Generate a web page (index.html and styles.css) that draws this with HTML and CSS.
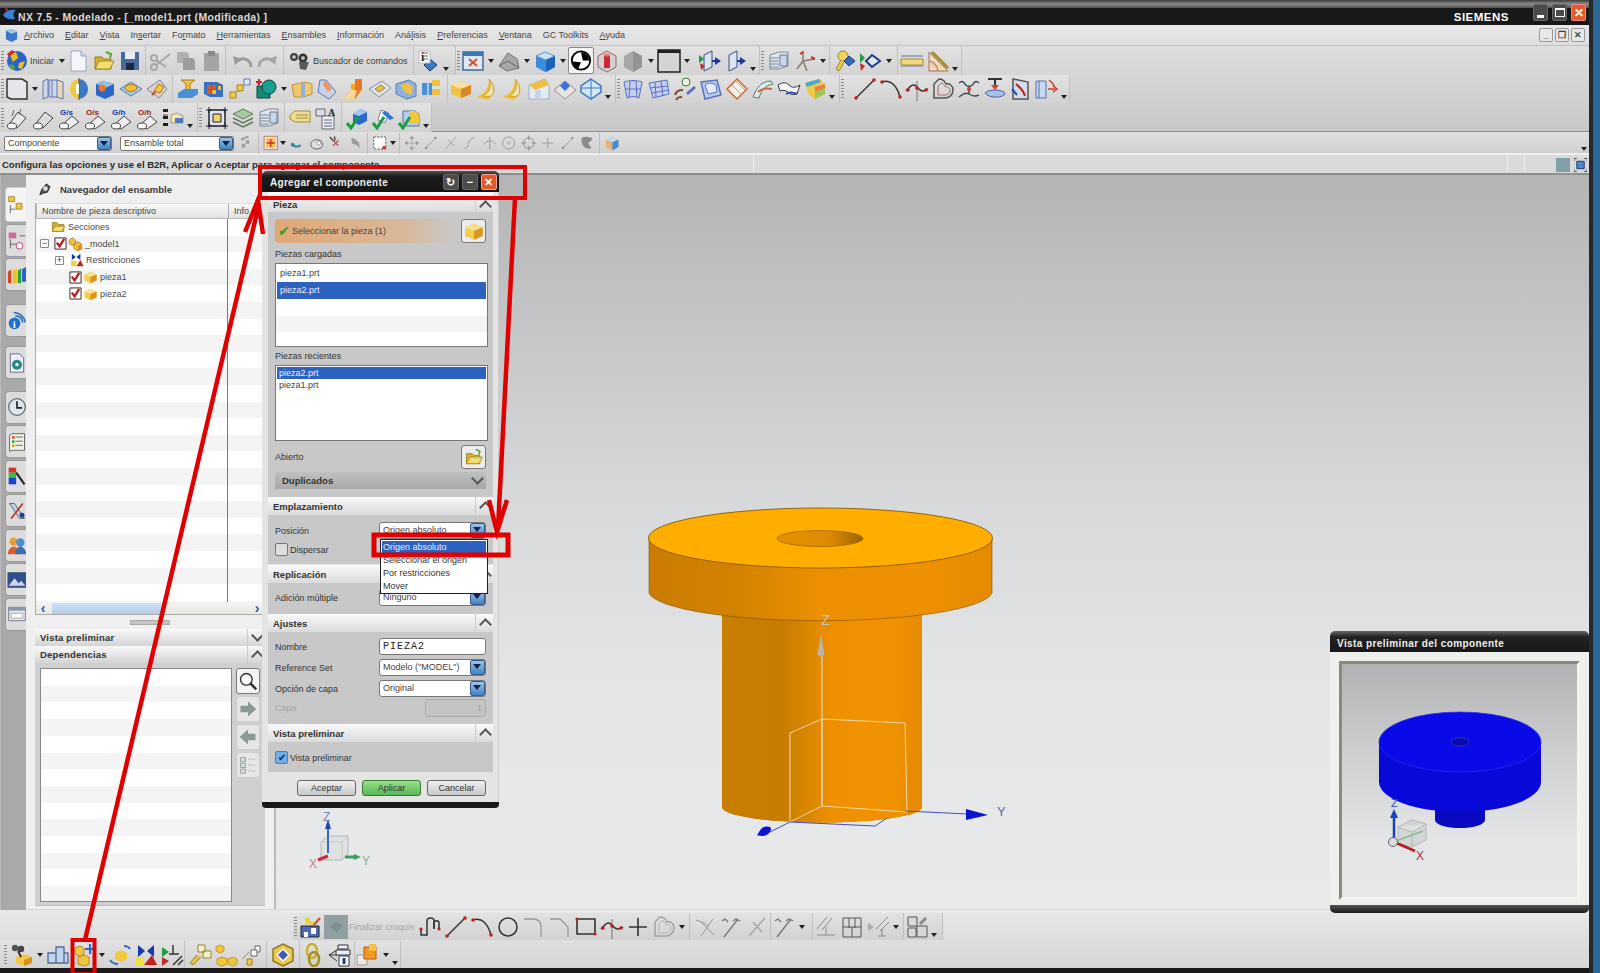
FILE: index.html
```
<!DOCTYPE html>
<html lang="es">
<head>
<meta charset="utf-8">
<title>NX 7.5 - Modelado</title>
<link rel="stylesheet" href="styles.css">
</head>
<body>
<svg class="defs" width="0" height="0">
<defs>
<linearGradient id="flange" x1="0" x2="1" y1="0" y2="0"><stop offset="0" stop-color="#c97c00"/><stop offset=".25" stop-color="#d28200"/><stop offset=".5" stop-color="#ec8f00"/><stop offset=".8" stop-color="#ee9000"/><stop offset="1" stop-color="#e58a00"/></linearGradient>
<linearGradient id="cyl" x1="0" x2="1" y1="0" y2="0"><stop offset="0" stop-color="#c97e00"/><stop offset=".3" stop-color="#c67c00"/><stop offset=".55" stop-color="#ee9000"/><stop offset=".85" stop-color="#f09200"/><stop offset="1" stop-color="#e58a00"/></linearGradient>
<linearGradient id="hole" x1="0" x2="1" y1="0" y2="0"><stop offset="0" stop-color="#e69000"/><stop offset=".6" stop-color="#e08a00"/><stop offset="1" stop-color="#9a6400"/></linearGradient>
<symbol id="globe" viewBox="0 0 24 24"><circle cx="12" cy="12" r="10" fill="#2a62c8"/><path d="M5 6l6-3 2 6-5 4zM14 14l6-2-3 8-4-1z" fill="#e8c020"/><path d="M4 15l5 1 1 5-4-1z" fill="#48a848"/><path d="M2 5l5-4 3 2-6 5z" fill="#d02828"/></symbol>
<symbol id="page" viewBox="0 0 24 24"><path d="M5 2h10l5 5v15H5z" fill="#f4f6fb" stroke="#9aa7c0"/><path d="M15 2v5h5" fill="#cdd6e8" stroke="#9aa7c0"/></symbol>
<symbol id="folder" viewBox="0 0 24 24"><path d="M3 8h7l2 2h7v10H3z" fill="#d8b030" stroke="#9a7a20"/><path d="M3 20l4-8h15l-4 8z" fill="#f4dc70" stroke="#a88a28"/><path d="M14 3l5 2-1 4" fill="none" stroke="#58a838" stroke-width="2"/></symbol>
<symbol id="save" viewBox="0 0 24 24"><path d="M3 3h18v18H3z" fill="#4a6a98"/><path d="M7 3h10v7H7z" fill="#e8ecf4"/><path d="M8 14h8v7H8z" fill="#1c2a48"/></symbol>
<symbol id="scis" viewBox="0 0 24 24"><g fill="none" stroke="#a8a8a8" stroke-width="2"><circle cx="6" cy="18" r="3"/><circle cx="6" cy="9" r="3"/><path d="M8 16l14-11M8 11l10 7"/></g></symbol>
<symbol id="copy" viewBox="0 0 24 24"><path d="M3 3h10l2 3v8H3z" fill="#b0b0b0"/><path d="M9 9h10l2 3v9H9z" fill="#9c9c9c"/></symbol>
<symbol id="paste" viewBox="0 0 24 24"><path d="M4 4h15v18H4z" fill="#a4a4a4"/><path d="M8 2h7v5H8z" fill="#8a8a8a"/></symbol>
<symbol id="undo" viewBox="0 0 24 24"><path d="M21 18c0-7-8-11-14-6" fill="none" stroke="#9a9a9a" stroke-width="3"/><path d="M3 7l2 9 7-6z" fill="#9a9a9a"/></symbol>
<symbol id="redo" viewBox="0 0 24 24"><path d="M3 18c0-7 8-11 14-6" fill="none" stroke="#a6a6a6" stroke-width="3"/><path d="M21 7l-2 9-7-6z" fill="#a6a6a6"/></symbol>
<symbol id="binoc" viewBox="0 0 24 24"><circle cx="6" cy="8" r="4" fill="#444"/><circle cx="15" cy="9" r="4.500" fill="#333"/><path d="M11 13l10 0-3 8-6-1z" fill="#565a60"/><circle cx="6" cy="8" r="1.800" fill="#ccc"/><circle cx="15" cy="9" r="2" fill="#bbb"/></symbol>
<symbol id="info" viewBox="0 0 24 24"><path d="M13 10l7 6-7 6-6-6z" fill="#3a78c8" stroke="#1c3a70"/><path d="M2 2h11v12H2z" fill="#fff" stroke="#bbb"/><text x="4" y="12" font-family="Liberation Serif" font-weight="700" font-size="12" fill="#222">i</text><path d="M7 4h4M7 7h4M7 10h4" stroke="#666"/></symbol>
<symbol id="fit" viewBox="0 0 24 24"><path d="M2 3h20v18H2z" fill="#dfe8f0" stroke="#3e6e9a" stroke-width="1.500"/><path d="M2 3h20v4H2z" fill="#3e78b4"/><path d="M8 10l8 7M16 10l-8 7" stroke="#d84c28" stroke-width="2"/></symbol>
<symbol id="shade" viewBox="0 0 24 24"><path d="M2 17l9-13 9 6 2 9-12 3z" fill="#a8a8a8" stroke="#707070"/><path d="M2 17l9-5 11 7" fill="none" stroke="#666"/></symbol>
<symbol id="cube" viewBox="0 0 24 24"><path d="M3 7l9-4 10 4v11l-10 5-9-5z" fill="#3a8ee0"/><path d="M3 7l9-4 10 4-9 4z" fill="#c8e4fa" stroke="#6098d0"/><path d="M13 11l9-4v11l-9 5z" fill="#1e62b8"/></symbol>
<symbol id="disk" viewBox="0 0 24 24"><circle cx="12" cy="12" r="10" fill="#fff" stroke="#000" stroke-width="2"/><path d="M12 3a9 9 0 0 1 9 9h-7zM3 13l9 1-3 7a9 9 0 0 1-6-8z" fill="#000"/></symbol>
<symbol id="redc" viewBox="0 0 24 24"><path d="M3 7l9-5 9 5v11l-9 5-9-5z" fill="#d8d0d0" stroke="#8a6a6a"/><path d="M9 6h6v13H9z" fill="#c82838"/><ellipse cx="12" cy="6" rx="3" ry="1.500" fill="#e87878"/></symbol>
<symbol id="hex" viewBox="0 0 24 24"><path d="M3 7l9-5 9 5v11l-9 5-9-5z" fill="#a8a8a8"/><path d="M12 2v21l9-5V7z" fill="#949494"/></symbol>
<symbol id="sq" viewBox="0 0 24 24"><path d="M1 1h22v22H1z" fill="#d4d4d4" stroke="#222" stroke-width="1.500"/><path d="M1 1h22v3H1z" fill="#222"/></symbol>
<symbol id="arrf" viewBox="0 0 24 24"><path d="M6 6l8-4v16l-8 4z" fill="#dce4f0" stroke="#30508a"/><path d="M14 12h8" stroke="#1838a0" stroke-width="2"/><path d="M17 8l6 4-6 4z" fill="#1838a0"/><path d="M1 6l5 4-5 4z" fill="#20a040"/><path d="M2 14l5 3-4 4z" fill="#c82828"/></symbol>
<symbol id="arrg" viewBox="0 0 24 24"><path d="M5 6l8-4v16l-8 4z" fill="#dce4f0" stroke="#30508a"/><path d="M13 12h6" stroke="#1838a0" stroke-width="2"/><path d="M16 8l6 4-6 4z" fill="#1838a0"/></symbol>
<symbol id="layers" viewBox="0 0 24 24"><path d="M3 6l9-3h9v14l-9 3H3z" fill="#e0e6ee" stroke="#7a8a9a"/><path d="M3 9h9M3 12h9M3 15h9M3 18h9" stroke="#7a8a9a"/><path d="M13 6h7v11h-7z" fill="#c8d8ec" stroke="#6a7a8a"/></symbol>
<symbol id="layg" viewBox="0 0 24 24"><path d="M2 8l10-5 10 5-10 5z" fill="#a8c8a0" stroke="#607860"/><path d="M2 12l10 5 10-5M2 16l10 5 10-5" fill="none" stroke="#607860" stroke-width="1.500"/></symbol>
<symbol id="csys" viewBox="0 0 24 24"><path d="M10 12V2M10 12l12-2M10 12l-6 8M10 12l4 10" stroke="#8a7a6a" stroke-width="1.500" fill="none"/><path d="M10 3l-3 2M22 10l-4-2" stroke="#c83030" stroke-width="2"/></symbol>
<symbol id="key" viewBox="0 0 24 24"><circle cx="10" cy="7" r="5" fill="#f0d860" stroke="#9a8420"/><path d="M8 11L3 20l3 2 5-9" fill="#e8cc50" stroke="#9a8420"/><path d="M16 7l6 5-6 5-5-5z" fill="#3868c0" stroke="#183880"/></symbol>
<symbol id="ray" viewBox="0 0 24 24"><path d="M13 6l8 6-8 6-6-6z" fill="#e0e8f4" stroke="#1c3c84" stroke-width="2"/><path d="M1 4l5 5-5 5z" fill="#20a040"/><path d="M1 14l5 3-4 5z" fill="#c82828"/></symbol>
<symbol id="ruler" viewBox="0 0 24 24"><path d="M1 7h22M1 17h22" stroke="#5a78a8"/><path d="M1 10h22v6H1z" fill="#f0d880" stroke="#a88a30"/></symbol>
<symbol id="angle" viewBox="0 0 24 24"><path d="M3 3l19 19H3z" fill="#f0dcb0" stroke="#b06868"/><path d="M3 12a10 10 0 0 1 9 10" fill="#e8b8a8" stroke="#b06868"/><path d="M6 3l16 16" stroke="#a88a30" stroke-width="3"/></symbol>
<symbol id="sket" viewBox="0 0 24 24"><path d="M2 2h15l5 3v17H6l-4-2z" fill="#e4e6ea" stroke="#333" stroke-width="1.500"/></symbol>
<symbol id="extr" viewBox="0 0 24 24"><path d="M2 4l5-2v18l-5 2zM8 3h9v17H8z" fill="#cdd8ee" stroke="#6078b0"/><path d="M16 3l6 2v17l-6-2z" fill="#e8d8b8" stroke="#6078b0"/><path d="M11 3v17" stroke="#6078b0"/></symbol>
<symbol id="revo" viewBox="0 0 24 24"><ellipse cx="12" cy="12" rx="9" ry="10" fill="#f0c838"/><path d="M12 2a9 10 0 0 1 0 20z" fill="#3a78c8"/><path d="M12 1v22" stroke="#555"/><path d="M9 7h3v10H9z" fill="#fff"/></symbol>
<symbol id="holeb" viewBox="0 0 24 24"><path d="M3 7l7-3 11 3v11l-9 4-9-4z" fill="#2a68c8"/><path d="M3 7l7-3 11 3-9 4z" fill="#90c0f0"/><circle cx="9" cy="11" r="3.500" fill="#f07820"/></symbol>
<symbol id="boss" viewBox="0 0 24 24"><path d="M1 12l11-7 11 7-11 7z" fill="#a8c8e8" stroke="#5a80b0"/><ellipse cx="12" cy="11" rx="6" ry="3.500" fill="#f0c030" stroke="#b07818"/></symbol>
<symbol id="fan" viewBox="0 0 24 24"><path d="M2 12L15 3l7 9-8 9z" fill="#dcd0c8" stroke="#7888a0"/><path d="M9 14l5-7 5 3-4 6z" fill="#f0c838" stroke="#a07020"/><path d="M7 18l3-3" stroke="#d84020" stroke-width="2"/></symbol>
<symbol id="padt" viewBox="0 0 24 24"><path d="M5 3h14l-5 4v6l-2 1-2-1V7z" fill="#f0c040" stroke="#a88020"/><path d="M2 16l6-4h14v5l-6 4H2z" fill="#4a90d8"/></symbol>
<symbol id="tile" viewBox="0 0 24 24"><path d="M2 5h13l6 3v12H8l-6-3z" fill="#3a70c0"/><path d="M5 8h4v4H5zM10 8h4v4h-4zM5 13h4v4H5z" fill="#d85830"/><path d="M10 13h4v4h-4zM16 9h3v4h-3z" fill="#e8c040"/></symbol>
<symbol id="nodes" viewBox="0 0 24 24"><path d="M6 18L18 6" stroke="#5a88c8" stroke-width="2" stroke-dasharray="3 2"/><path d="M2 15h6v6H2zM9 8h6v6H9z" fill="#f0d040" stroke="#a08020"/><path d="M16 2h6v6h-6z" fill="#e0e8f8" stroke="#6078a8"/></symbol>
<symbol id="tplus" viewBox="0 0 24 24"><path d="M3 9h13v12H3z" fill="#148a78" stroke="#0a4438"/><circle cx="15" cy="10" r="7" fill="#18a090" stroke="#0a4438"/><path d="M2 5h6M5 2v6" stroke="#d02020" stroke-width="2"/></symbol>
<symbol id="ycube" viewBox="0 0 24 24"><path d="M2 8l13-3 7 2v10l-8 3H4z" fill="#f0c868" stroke="#c09040"/><path d="M11 6h4v14h-4z" fill="#90b0e0"/></symbol>
<symbol id="blade" viewBox="0 0 24 24"><path d="M4 3h6l10 12-7 7L2 15z" fill="#c8d4ec" stroke="#5a78b8"/><path d="M9 3l7 9-4 3-5-7z" fill="#f09860"/></symbol>
<symbol id="yslab" viewBox="0 0 24 24"><path d="M2 22l7-10V7h9l2-5v10l-7 10z" fill="#f0a820"/><path d="M13 2h7v10l-7 10z" fill="#e87820"/><path d="M2 22l7-10 6 2-3 8z" fill="#f8d898"/></symbol>
<symbol id="slot" viewBox="0 0 24 24"><path d="M1 12l13-8 9 7-12 9z" fill="#dce4ec" stroke="#8090a8"/><path d="M7 12l6-4 4 3-6 4z" fill="#f0c040" stroke="#a08030"/></symbol>
<symbol id="wedge" viewBox="0 0 24 24"><path d="M2 7l13-4 7 4v12l-9 3-11-5z" fill="#90b0e0" stroke="#6080b0"/><path d="M6 8l8-2 5 4-2 8-6-3z" fill="#f0c040"/></symbol>
<symbol id="cyl2" viewBox="0 0 24 24"><path d="M2 6h10v12H2z" fill="#4a90d8"/><path d="M12 3h8v6h-8zM12 12h8v6h-8z" fill="#f0c040"/><path d="M8 6v12" stroke="#fff"/></symbol>
<symbol id="cup" viewBox="0 0 24 24"><path d="M2 8l10-4 10 4v9l-10 4-10-4z" fill="#f4c040"/><path d="M2 8l10-4 10 4-10 4z" fill="#f8e0a0"/><path d="M12 12v9l10-4V8z" fill="#d88828"/></symbol>
<symbol id="petal" viewBox="0 0 24 24"><path d="M14 2c7 5 7 14 0 20-5 1-10-1-12-3 8-1 12-9 12-17z" fill="#f0c030"/><path d="M14 2c3 6 1 14-6 17 4 1 8 1 10-2 2-5 0-11-4-15z" fill="#f4e4b0" stroke="#c8a040"/></symbol>
<symbol id="gable" viewBox="0 0 24 24"><path d="M2 8l16-6 4 6v14H2z" fill="#e4ecf8" stroke="#a0b0c8"/><path d="M2 8l16-6 4 6-14 5z" fill="#f0c040"/><path d="M8 13h6v9H8z" fill="#c8d4e8"/></symbol>
<symbol id="diam" viewBox="0 0 24 24"><path d="M1 13l11-9 11 9-11 9z" fill="#e8e4e0" stroke="#909090"/><path d="M7 9l5-5 5 5-5 5z" fill="#3a70d8"/></symbol>
<symbol id="sphere" viewBox="0 0 24 24"><path d="M12 2l10 7v6l-10 7-10-7V9z" fill="#d4e8fa" stroke="#3a78c8" stroke-width="1.500"/><path d="M2 11h20M12 2v20" stroke="#3a78c8"/></symbol>
<symbol id="curv" viewBox="0 0 24 24"><path d="M3 5c6-2 12-2 18 0l-3 16c-4-2-8-2-12 0z" fill="#c4d0f0" stroke="#5a70c0"/><path d="M9 4l-1 17M15 4l1 17M4 12h16" stroke="#5a70c0"/></symbol>
<symbol id="grid" viewBox="0 0 24 24"><path d="M2 6l18-3 2 14-16 4z" fill="#c4d0f0" stroke="#5a70c0"/><path d="M8 5l1 15M14 4l2 15M3 11l18-2M5 16l17-3" stroke="#5a70c0"/></symbol>
<symbol id="gauge" viewBox="0 0 24 24"><circle cx="13" cy="5" r="4" fill="#f0f0f0" stroke="#357a35"/><path d="M2 18c1-4 4-5 8-5M3 23c2-3 3-3 6-3" fill="none" stroke="#7a4a2a" stroke-width="2"/><path d="M13 16l8-7 2 2-8 7z" fill="#5a70c0"/></symbol>
<symbol id="warp" viewBox="0 0 24 24"><path d="M2 5l16-2 4 15-16 4z" fill="#b8ccec" stroke="#5a70c0" stroke-width="1.500"/><path d="M6 8c4-3 8-2 11 0l1 7-9 2z" fill="#e4ecf8" stroke="#5a70c0"/></symbol>
<symbol id="fold" viewBox="0 0 24 24"><path d="M12 2l10 10-10 10L2 12z" fill="#f4f0e8" stroke="#d06838" stroke-width="1.500"/><path d="M7 8l10 10M11 4l9 9" stroke="#90a8d0"/></symbol>
<symbol id="swirl" viewBox="0 0 24 24"><path d="M2 20c3-8 8-16 18-16l2 3C14 8 10 14 8 21z" fill="#e0e8f0" stroke="#508060"/><path d="M7 15c3-3 8-4 14-3" fill="none" stroke="#d06838" stroke-width="2"/></symbol>
<symbol id="leaf" viewBox="0 0 24 24"><path d="M1 8c5-3 8-3 11 0s6 3 11 0l-3 9c-4 1-6 1-9-2-3-2-5-2-8-1z" fill="#f4f6fa" stroke="#333"/><path d="M9 17c3-2 7-2 11 0" stroke="#3048b0" stroke-width="2" fill="none"/></symbol>
<symbol id="rain" viewBox="0 0 24 24"><path d="M2 6l14-4 6 5v10l-10 5-6-4z" fill="#f0c848"/><path d="M2 6l14-4 2 3-14 5z" fill="#4aa8d8"/><path d="M12 10l10-3v4l-10 4z" fill="#e88040"/><path d="M12 15l10-4v6l-10 5z" fill="#a0c858"/></symbol>
<symbol id="line" viewBox="0 0 24 24"><path d="M3 21L21 3" stroke="#333" stroke-width="1.500"/><circle cx="3" cy="21" r="1.800" fill="#c02020"/><circle cx="21" cy="3" r="1.800" fill="#c02020"/></symbol>
<symbol id="arc" viewBox="0 0 24 24"><path d="M3 5c9-3 15 4 18 15" fill="none" stroke="#333" stroke-width="1.500"/><circle cx="3" cy="5" r="1.800" fill="#c02020"/><circle cx="21" cy="20" r="1.800" fill="#c02020"/></symbol>
<symbol id="spline" viewBox="0 0 24 24"><path d="M1 14c4-4 7-9 11-4s6 5 11 2" fill="none" stroke="#333" stroke-width="1.500"/><path d="M12 4v20" stroke="#777"/><circle cx="12" cy="11" r="1.800" fill="#c02020"/><circle cx="3" cy="13" r="1.800" fill="#c02020"/><circle cx="21" cy="13" r="1.800" fill="#c02020"/></symbol>
<symbol id="prof" viewBox="0 0 24 24"><path d="M3 21V7l5-5c5 0 6 3 7 5 3-1 7 1 7 6 0 5-4 8-8 8z" fill="none" stroke="#555" stroke-width="1.500"/><path d="M7 18V9l3-3c3 0 3 2 4 4 3-1 5 1 5 3 0 3-2 5-5 5z" fill="none" stroke="#b06868"/></symbol>
<symbol id="profg" viewBox="0 0 24 24"><path d="M3 21V7l5-5c5 0 6 3 7 5 3-1 7 1 7 6 0 5-4 8-8 8z" fill="none" stroke="#a4a4a4" stroke-width="1.500"/><path d="M7 18V9l3-3c3 0 3 2 4 4 3-1 5 1 5 3 0 3-2 5-5 5z" fill="none" stroke="#b4b4b4"/></symbol>
<symbol id="trim" viewBox="0 0 24 24"><path d="M2 6c6-5 5 5 10 3M22 6c-6-5-5 5-10 3M12 9v8M2 20c4-3 7-5 10-3s6 3 10 1" fill="none" stroke="#3a4a5a" stroke-width="1.500"/><circle cx="12" cy="12" r="2" fill="#d04020"/></symbol>
<symbol id="press" viewBox="0 0 24 24"><path d="M5 2h14M12 2v7" stroke="#333" stroke-width="2"/><path d="M12 13l-4-5h8z" fill="#d84020"/><path d="M2 16c4-4 16-4 20 0 0 5-16 6-20 0z" fill="#a8c0e8" stroke="#5060a0"/></symbol>
<symbol id="cur2" viewBox="0 0 24 24"><path d="M4 2l15 3v17H4z" fill="#d4dcec" stroke="#555" stroke-width="1.500"/><path d="M7 7c3 3 7 5 9 12" fill="none" stroke="#c02020" stroke-width="2"/><path d="M3 12l5 6" stroke="#2050b0" stroke-width="2"/></symbol>
<symbol id="cyar" viewBox="0 0 24 24"><path d="M1 4h10v17H1z" fill="#c8d8f0" stroke="#5070b0"/><path d="M4 4v17" stroke="#5070b0"/><path d="M13 12h7" stroke="#d83820" stroke-width="1.500"/><path d="M18 9l4 3-4 3M14 3c3 2 5 5 6 8" fill="none" stroke="#d83820" stroke-width="1.500"/></symbol>
<symbol id="move" viewBox="0 0 24 24"><path d="M12 2v20M2 12h20M12 2l-3 3h6zM12 22l-3-3h6zM2 12l3-3v6zM22 12l-3-3v6z" stroke="#9a9a9a" fill="#9a9a9a"/></symbol>
<symbol id="gline" viewBox="0 0 24 24"><path d="M4 20L20 4" stroke="#a0a0a0" stroke-width="1.500"/><path d="M4 20l2-1M20 4l-2 1" stroke="#777" stroke-width="3"/></symbol>
<symbol id="gx" viewBox="0 0 24 24"><path d="M4 21L20 3M8 7l9 10" stroke="#a8a8a8" stroke-width="1.500"/></symbol>
<symbol id="gs" viewBox="0 0 24 24"><path d="M4 20C14 20 6 4 20 4" fill="none" stroke="#a0a0a0" stroke-width="1.500"/></symbol>
<symbol id="gt" viewBox="0 0 24 24"><path d="M12 3v18M3 14c6-7 12-7 18 0" fill="none" stroke="#9a9a9a" stroke-width="1.500"/></symbol>
<symbol id="gcirc" viewBox="0 0 24 24"><circle cx="12" cy="12" r="9" fill="none" stroke="#a0a0a0" stroke-width="1.500"/><circle cx="12" cy="12" r="2" fill="none" stroke="#a0a0a0"/></symbol>
<symbol id="gcross" viewBox="0 0 24 24"><circle cx="12" cy="12" r="8" fill="none" stroke="#909090" stroke-width="1.500"/><path d="M12 1v7M12 16v7M1 12h7M16 12h7" stroke="#909090" stroke-width="1.500"/></symbol>
<symbol id="plus" viewBox="0 0 24 24"><path d="M12 4v16M4 12h16" stroke="#a0a0a0" stroke-width="1.500"/></symbol>
<symbol id="plusb" viewBox="0 0 24 24"><path d="M12 3v18M3 12h18" stroke="#333" stroke-width="1.600"/></symbol>
<symbol id="gblob" viewBox="0 0 24 24"><path d="M4 5c6-4 14-2 17 1l-4 4c-3 0-3 4 0 6l2 4c-8 2-15-2-15-15z" fill="#8a8a8a"/></symbol>
<symbol id="selg" viewBox="0 0 24 24"><path d="M5 4h5v4H5zM12 8h5v5h-5zM6 13h5v6H6z" fill="#9aa0a0"/><path d="M10 4l6-1" stroke="#888" stroke-width="2"/></symbol>
<symbol id="selr" viewBox="0 0 24 24"><path d="M2 2h20v20H2z" fill="#f0e4d8" stroke="#b05050"/><path d="M5 5h14v14H5z" fill="#f0c050"/><path d="M12 6v12M6 12h12" stroke="#c83020" stroke-width="2"/></symbol>
<symbol id="swirlb" viewBox="0 0 24 24"><path d="M4 13a8 6 0 0 0 14 2" fill="none" stroke="#2a8aa0" stroke-width="3"/><path d="M4 11l6 3-6 4z" fill="#2a8aa0"/></symbol>
<symbol id="eggs" viewBox="0 0 24 24"><ellipse cx="12" cy="14" rx="9" ry="7" fill="#e0e0e0" stroke="#666" stroke-width="1.500"/><circle cx="15" cy="12" r="3" fill="#fff" stroke="#777"/></symbol>
<symbol id="cross" viewBox="0 0 24 24"><path d="M8 8l8 8M16 8l-8 8" stroke="#c05848" stroke-width="2"/><path d="M3 3l6 6M10 2l1 6" stroke="#444" stroke-width="2"/></symbol>
<symbol id="pin" viewBox="0 0 24 24"><path d="M5 4l6 2 6 6 1 8-5-5-6-2z" fill="#9a9a9a"/></symbol>
<symbol id="dash" viewBox="0 0 24 24"><path d="M3 3h18v18H3z" fill="#fff" stroke="#555" stroke-dasharray="3 2" stroke-width="1.500"/><path d="M16 17h5v4h-5z" fill="#c03020"/></symbol>
<symbol id="g1" viewBox="0 0 24 24"><path d="M3 5c3 1 10 3 12 6M20 4l-12 17M21 20L7 6" stroke="#999" fill="none"/></symbol>
<symbol id="g2" viewBox="0 0 24 24"><path d="M5 22l14-18M3 6l3-2 3 3M14 6l3-2 4 2" stroke="#777" fill="none" stroke-width="1.300"/></symbol>
<symbol id="g3" viewBox="0 0 24 24"><path d="M3 20h18M12 20v-8M3 14L13 2M8 15L18 3" stroke="#8a8a8a" fill="none"/></symbol>
<symbol id="g4" viewBox="0 0 24 24"><path d="M3 3h18v19H3z" fill="none" stroke="#555"/><path d="M3 12h18M9 3v10M15 3v10M12 12v10" stroke="#555"/></symbol>
<symbol id="g5" viewBox="0 0 24 24"><path d="M2 8l6 4-6 4z" fill="#aaa"/><path d="M12 21h8M16 21v-7M10 14L22 2M14 16L23 7" stroke="#888"/></symbol>
<symbol id="g6" viewBox="0 0 24 24"><path d="M3 2h9v9H3zM3 13h8v9H3zM12 11h10v11H12z" fill="#d8d8d8" stroke="#555"/><path d="M15 9l6-6" stroke="#888" stroke-width="3"/></symbol>
<symbol id="rect" viewBox="0 0 24 24"><path d="M3 4h18v15H3z" fill="none" stroke="#333" stroke-width="1.600"/><circle cx="3" cy="4" r="1.600" fill="#c02020"/><circle cx="21" cy="19" r="1.600" fill="#c02020"/></symbol>
<symbol id="circ" viewBox="0 0 24 24"><circle cx="12" cy="12" r="9" fill="none" stroke="#333" stroke-width="1.500"/></symbol>
<symbol id="cnr1" viewBox="0 0 24 24"><path d="M2 4h9c5 0 8 3 8 8v10" fill="none" stroke="#999" stroke-width="1.300"/></symbol>
<symbol id="cnr2" viewBox="0 0 24 24"><path d="M2 4h10l8 8v10" fill="none" stroke="#999" stroke-width="1.300"/></symbol>
<symbol id="prof2" viewBox="0 0 24 24"><path d="M3 14v6h6V6c0-4 7-4 7 0v8" fill="none" stroke="#333" stroke-width="1.500"/><path d="M16 14v-6c0-3 5-3 5 0v6" fill="none" stroke="#333" stroke-width="1.500"/><circle cx="3" cy="14" r="1.600" fill="#c02020"/><circle cx="21" cy="14" r="1.600" fill="#c02020"/></symbol>
<symbol id="star" viewBox="0 0 24 24"><path d="M3 11h18v11H3z" fill="#4a6ab8" stroke="#222"/><path d="M6 17h4v5H6zM13 13h5v6h-5z" fill="#fff"/><path d="M10 2l2 4 4 1-3 3-3-2-3 2 1-4-2-2 3-1z" fill="#f0d020"/><path d="M15 11L22 3" stroke="#d05020" stroke-width="2"/></symbol>
<symbol id="tex" viewBox="0 0 24 24"><path d="M0 0h24v24H0z" fill="#8f9fa2"/><path d="M5 12l7-6 7 5-6 7z" fill="#7f8f90" stroke="#a0aeb0" stroke-dasharray="1 1"/></symbol>
<symbol id="ybin" viewBox="0 0 24 24"><path d="M6 14l8-3 8 3v6l-8 3-8-3z" fill="#f0c840"/><path d="M14 17l8-3v6l-8 3z" fill="#d89020"/><circle cx="5" cy="5" r="3.200" fill="#555"/><circle cx="11" cy="6" r="3.200" fill="#444"/><path d="M8 8l3 6" stroke="#333" stroke-width="2"/></symbol>
<symbol id="blocks" viewBox="0 0 24 24"><path d="M2 10h8v10H2zM10 4h8v16h-8zM18 10h4v10h-4z" fill="#c0d4f0" stroke="#5a6a90" stroke-width="1.300"/></symbol>
<symbol id="addc" viewBox="0 0 24 24"><path d="M3 5l5-2 4 2v6l-4 2-5-2zM6 14l6-2 5 2v7l-5 2-6-2z" fill="#f0c840" stroke="#b88820"/><path d="M18 1v10M13 6h10" stroke="#1a6ad8" stroke-width="2"/></symbol>
<symbol id="orb" viewBox="0 0 24 24"><path d="M7 10l6-3 6 3v6l-6 3-6-3z" fill="#f0c840"/><path d="M2 17c2 3 5 4 8 4M16 3c3 0 5 1 6 3" fill="none" stroke="#3a6ab8" stroke-width="2"/></symbol>
<symbol id="constr" viewBox="0 0 24 24"><path d="M4 2l7 6-7 6zM20 2l-7 6 7 6z" fill="#1838b0"/><path d="M2 14h8v8H2z" fill="#f0e040"/><path d="M10 22l8-10 5 10z" fill="#c02020"/></symbol>
<symbol id="perp" viewBox="0 0 24 24"><path d="M13 2v9M9 11h10M13 22l9-9M18 22l5-5" stroke="#333" stroke-width="1.500"/><path d="M2 4l7 5-7 5z" fill="#20a040"/><path d="M2 14l7 4-7 5z" fill="#c82828"/></symbol>
<symbol id="keyc" viewBox="0 0 24 24"><path d="M10 2h7v7h-7zM15 8h8v7h-8z" fill="#f4f0d8" stroke="#9a8420"/><path d="M9 12l-7 8 3 2 8-8" fill="#e8c040" stroke="#9a8420"/></symbol>
<symbol id="dots3" viewBox="0 0 24 24"><path d="M6 2l4 2v4l-4 2-4-2V4zM8 14l5 2v5l-5 2-5-2v-5zM19 14l4 2v5l-4 2-5-2v-5z" fill="#f0c840" stroke="#c89828"/></symbol>
<symbol id="chain" viewBox="0 0 24 24"><path d="M2 16l7-7" stroke="#888"/><path d="M7 16h5v6H7z" fill="#f0c840" stroke="#a88020"/><path d="M15 9h5V3h-5z" fill="#fff" stroke="#666"/><path d="M11 13h6V7h-6z" fill="#fff" stroke="#666"/></symbol>
<symbol id="hexd" viewBox="0 0 24 24"><path d="M12 1l10 5v12l-10 5-10-5V6z" fill="#e8c850" stroke="#907820" stroke-width="1.500"/><path d="M12 5l7 7-7 7-7-7z" fill="#fff"/><path d="M12 7l5 5-5 5-5-5z" fill="#3a5ab8"/></symbol>
<symbol id="link" viewBox="0 0 24 24"><ellipse cx="11" cy="8" rx="5" ry="7" fill="none" stroke="#c8b030" stroke-width="2.500"/><ellipse cx="13" cy="16" rx="5" ry="7" fill="none" stroke="#a89020" stroke-width="2.500"/></symbol>
<symbol id="tree" viewBox="0 0 24 24"><path d="M2 12l8-5M2 12l8 6" stroke="#333"/><path d="M2 12h8" stroke="#333"/><path d="M11 2h10v4H11zM9 7h14v5H9z" fill="#eef" stroke="#333"/><path d="M12 13h10v10H12z" fill="#fff" stroke="#333"/><path d="M17 15v6" stroke="#1c3c84" stroke-width="3"/></symbol>
<symbol id="gbox" viewBox="0 0 24 24"><path d="M1 12h10v10H1z" fill="#e8e8e8" stroke="#999"/><path d="M8 4h12v12H8z" fill="#f09820" stroke="#c05818"/><path d="M13 1h7v7h-7z" fill="#f8c040"/></symbol>
<symbol id="ck" viewBox="0 0 14 14"><path d="M1 1h12v12H1z" fill="#fff" stroke="#3a1a1a"/><path d="M3 6l3 4 5-8" fill="none" stroke="#c01818" stroke-width="2.500"/></symbol>
<symbol id="asm" viewBox="0 0 18 18"><path d="M1 4l4-3 4 3v5l-4 2-4-2zM7 9l5-3 5 3v6l-5 3-5-3z" fill="#f0c040" stroke="#b08020"/><path d="M12 12v6l5-3V9z" fill="#d89020"/></symbol>
<symbol id="part" viewBox="0 0 16 16"><path d="M1 5l7-3 7 3v7l-7 3-7-3z" fill="#f4cc50"/><path d="M1 5l7-3 7 3-7 3z" fill="#f8e090"/><path d="M8 8l7-3v7l-7 3z" fill="#d89820"/></symbol>
<symbol id="fopen" viewBox="0 0 16 16"><path d="M1 3h5l2 2h6v8H1z" fill="#d8b030" stroke="#9a7a20"/><path d="M1 13l3-6h11l-3 6z" fill="#f4dc70" stroke="#a88a28"/></symbol>
<symbol id="cons" viewBox="0 0 18 18"><path d="M3 1l5 4-5 4zM14 1L9 5l5 4z" fill="#1838b0"/><path d="M2 10h7v7H2z" fill="#f0d040"/><path d="M9 17l5-8 4 8z" fill="#c02020"/></symbol>
<symbol id="mag" viewBox="0 0 24 24"><circle cx="10" cy="10" r="7" fill="#f6f8fa" stroke="#333" stroke-width="1.600"/><path d="M15 15l7 7" stroke="#333" stroke-width="3"/></symbol>
<symbol id="arrr" viewBox="0 0 24 24"><path d="M3 8h9V3l10 9-10 9v-5H3z" fill="#8a9a98"/></symbol>
<symbol id="arrl" viewBox="0 0 24 24"><path d="M21 8h-9V3L2 12l10 9v-5h9z" fill="#8a9a98"/></symbol>
<symbol id="lst" viewBox="0 0 24 24"><path d="M3 3h6v5H3zM3 10h6v5H3zM3 17h6v5H3z" fill="#cdd" stroke="#999"/><path d="M12 5h9M12 12h9M12 19h9" stroke="#aaa" stroke-dasharray="2 1"/></symbol>
<symbol id="navk" viewBox="0 0 14 14"><path d="M2 13l2-6 5-6 4 3-3 6-5 1z" fill="#555" stroke="#222"/><circle cx="8" cy="6" r="2.500" fill="#ddd"/></symbol>
<symbol id="t1" viewBox="0 0 24 24"><path d="M2 2h7v6H2zM11 10h7v7h-7z" fill="#f0c840" stroke="#a88020"/><path d="M4 12v10M4 17h6" stroke="#555"/></symbol>
<symbol id="t2" viewBox="0 0 24 24"><path d="M2 3h9v7H2z" fill="#d068a0"/><circle cx="15" cy="19" r="4" fill="#fff" stroke="#b02060"/><path d="M4 11v11M4 17h7M15 7h7" stroke="#555"/></symbol>
<symbol id="t3" viewBox="0 0 24 24"><path d="M1 8l4-3v17H1z" fill="#e04020"/><path d="M7 7l5-3v18H7z" fill="#f0c020"/><path d="M13 7l4-3v18h-4z" fill="#20a040"/><path d="M18 5l5-3v18h-5z" fill="#3060c8"/></symbol>
<symbol id="t4" viewBox="0 0 24 24"><circle cx="9" cy="16" r="7" fill="#2070c8"/><text x="7" y="21" font-family="Liberation Serif" font-weight="700" font-size="13" fill="#fff">i</text><path d="M8 3c7 0 13 5 14 12M10 7c5 0 8 3 9 8" fill="none" stroke="#2070c8" stroke-width="2"/></symbol>
<symbol id="t5" viewBox="0 0 24 24"><path d="M4 1h11l5 5v17H4z" fill="#eef" stroke="#557"/><circle cx="12" cy="14" r="6" fill="#2a8a80"/><circle cx="12" cy="14" r="2" fill="#fff"/></symbol>
<symbol id="t6" viewBox="0 0 24 24"><circle cx="12" cy="12" r="10" fill="#dfe6ee" stroke="#5a6a7a" stroke-width="1.500"/><path d="M12 5v8h6" fill="none" stroke="#223" stroke-width="2"/></symbol>
<symbol id="t7" viewBox="0 0 24 24"><path d="M3 4l3-2h15v20H6l-3 1z" fill="#f0f0e4" stroke="#555"/><path d="M10 6h9M10 11h9M10 16h9" stroke="#555"/><path d="M6 5h3v3H6z" fill="#d04020"/><path d="M6 10h3v3H6z" fill="#20a040"/><path d="M6 15h3v3H6z" fill="#d0a020"/></symbol>
<symbol id="t8" viewBox="0 0 24 24"><path d="M2 2h9v6H2z" fill="#e03020"/><path d="M2 8h9v6H2z" fill="#30c040"/><path d="M2 14h9v8H2z" fill="#2040d0"/><path d="M11 8l10 14" stroke="#222" stroke-width="2.500"/></symbol>
<symbol id="t9" viewBox="0 0 24 24"><path d="M3 3h6l12 18h-6z" fill="#c0d0e8" stroke="#556"/><path d="M5 21l14-18" stroke="#c03020" stroke-width="2"/><circle cx="18" cy="17" r="3" fill="#203a90"/></symbol>
<symbol id="t10" viewBox="0 0 24 24"><circle cx="8" cy="8" r="5" fill="#e8a030"/><circle cx="16" cy="9" r="5" fill="#4a90d0"/><path d="M1 23c0-6 4-9 7-9s7 3 7 9z" fill="#d86030"/><path d="M10 23c0-6 3-9 6-9s7 3 7 9z" fill="#3a70b0"/></symbol>
<symbol id="t11" viewBox="0 0 24 24"><path d="M1 3h22v18H1z" fill="#2f4f8f" stroke="#567"/><path d="M2 19l7-9 5 6 3-3 5 6z" fill="#d0d8e8"/></symbol>
<symbol id="t12" viewBox="0 0 24 24"><path d="M2 4h20v16H2z" fill="#e8eaee" stroke="#667"/><path d="M2 4h20v4H2z" fill="#8898a8"/><path d="M5 11h14v6H5z" fill="#fff" stroke="#999"/></symbol>
<symbol id="selblk" viewBox="0 0 24 24"><path d="M3 7l9-4 10 4v11l-10 5-9-5z" fill="#f0b070"/><path d="M3 7l9-4 10 4-9 4z" fill="#b8dcf8"/><path d="M13 11l9-4v11l-9 5z" fill="#3a8ae0"/></symbol>
<symbol id="fr1" viewBox="0 0 24 24"><path d="M3 20L13 6l8 6-9 10z" fill="#e8e8e8" stroke="#444"/><ellipse cx="7" cy="20" rx="4.500" ry="3" fill="#fff" stroke="#444"/><path d="M9 4l-2 6M16 3l-2 6" stroke="#666"/></symbol>
<symbol id="frs" viewBox="0 0 24 24"><path d="M3 20L14 6l8 6-10 10z" fill="#dcdcdc" stroke="#444"/><ellipse cx="7" cy="20" rx="4.500" ry="3" fill="#fff" stroke="#444"/></symbol>
<symbol id="gs1" viewBox="0 0 24 24"><path d="M3 21L15 10l7 6-10 7z" fill="#eee" stroke="#444"/><ellipse cx="7" cy="20" rx="4.500" ry="3" fill="#fff" stroke="#444"/><text x="3" y="9" class="ts" fill="#1838a0">G/s</text></symbol>
<symbol id="os1" viewBox="0 0 24 24"><path d="M3 21L15 10l7 6-10 7z" fill="#eee" stroke="#444"/><ellipse cx="7" cy="20" rx="4.500" ry="3" fill="#fff" stroke="#444"/><text x="3" y="9" class="ts" fill="#a02020">O/s</text></symbol>
<symbol id="gh1" viewBox="0 0 24 24"><path d="M3 21L15 10l7 6-10 7z" fill="#eee" stroke="#444"/><ellipse cx="7" cy="20" rx="4.500" ry="3" fill="#fff" stroke="#444"/><text x="3" y="9" class="ts" fill="#1838a0">G/h</text></symbol>
<symbol id="oh1" viewBox="0 0 24 24"><path d="M3 21L15 10l7 6-10 7z" fill="#eee" stroke="#444"/><ellipse cx="7" cy="20" rx="4.500" ry="3" fill="#fff" stroke="#444"/><text x="3" y="9" class="ts" fill="#a02020">O/h</text></symbol>
<symbol id="tabs" viewBox="0 0 24 24"><path d="M2 3h5v3H2zM2 10h5v3H2zM2 17h5v3H2z" fill="#222"/><path d="M2 9h5" stroke="#c02020"/><path d="M10 9l6-2 6 3v7H10z" fill="#f0e8a8" stroke="#999"/><path d="M14 12h8v5h-8z" fill="#5078c0"/></symbol>
<symbol id="frame3" viewBox="0 0 24 24"><path d="M4 4h16v16H4z" fill="#dfe4f0" stroke="#223" stroke-width="1.500"/><path d="M8 8h8v8H8z" fill="#f0d868" stroke="#223"/><path d="M1 4h6M4 1v6M17 4h6M20 1v6M1 20h6M4 17v6M17 20h6M20 17v6" stroke="#223"/></symbol>
<symbol id="tag" viewBox="0 0 24 24"><path d="M2 9l5-4h15v11H7l-5-3z" fill="#f0dc90" stroke="#a09040"/><path d="M8 9h12M8 12h12" stroke="#a09040"/></symbol>
<symbol id="txtdoc" viewBox="0 0 24 24"><path d="M2 3h9v7H2z" fill="#dde" stroke="#666"/><path d="M8 10h12v13H8z" fill="#e8eef8" stroke="#667"/><text x="14" y="10" class="tA">A</text><path d="M10 14h8M10 17h8M10 20h8" stroke="#667"/></symbol>
<symbol id="chk1" viewBox="0 0 24 24"><path d="M8 8l8-5 6 3v9l-8 4-6-3z" fill="#2a68d0"/><path d="M8 8l8-5 6 3-8 4z" fill="#a0c8f0"/><path d="M2 17l4 5 7-11" fill="none" stroke="#18a040" stroke-width="3"/></symbol>
<symbol id="chk2" viewBox="0 0 24 24"><path d="M10 4l8 3-4 10-7-3z" fill="#f4f6fa" stroke="#889"/><path d="M14 5l9 7-4 2-8-7z" fill="#2a78d8"/><path d="M2 17l4 5 7-11" fill="none" stroke="#18a040" stroke-width="3"/></symbol>
<symbol id="chk3" viewBox="0 0 24 24"><path d="M6 5h12l4 3v12H10l-4-3z" fill="#b8d0f0" stroke="#5070a0"/><path d="M12 5h6l4 3v10h-10z" fill="#f0c840"/><path d="M2 17l4 5 7-11" fill="none" stroke="#18a040" stroke-width="3"/></symbol>
</defs>
</svg>

<div class="app">
  <header class="titlebar">
    <svg class="ttl-ico" viewBox="0 0 16 16"><path d="M1 8c3-5 8-6 13-5-3 2-3 6-1 9-5 1-9 0-12-4z" fill="#3a80d8"/><path d="M3 1l3 1-1 3z" fill="#d83030"/></svg>
    <span class="ttl-text">NX 7.5 - Modelado - [_model1.prt (Modificada) ]</span>
    <span class="siemens">SIEMENS</span>
    <span class="wbtn"><span class="wmin"></span></span>
    <span class="wbtn"><span class="wmax"></span></span>
    <span class="wbtn wclose">✕</span>
  </header>

  <nav class="menubar">
    <svg class="menu-ico" viewBox="0 0 16 16"><path d="M2 3l6-2 6 3v8l-6 3-6-3z" fill="#3a78c8"/><path d="M2 3l6 3 6-2-6-3z" fill="#a0c8f0"/></svg>
    <span class="mi"><u>A</u>rchivo</span><span class="mi"><u>E</u>ditar</span><span class="mi"><u>V</u>ista</span><span class="mi">In<u>s</u>ertar</span><span class="mi">Fo<u>r</u>mato</span><span class="mi"><u>H</u>erramientas</span><span class="mi"><u>E</u>nsambles</span><span class="mi"><u>I</u>nformación</span><span class="mi">Aná<u>l</u>isis</span><span class="mi"><u>P</u>referencias</span><span class="mi"><u>V</u>entana</span><span class="mi">GC Toolkits</span><span class="mi"><u>A</u>yuda</span>
    <span class="mdi"><span class="mbtn">_</span><span class="mbtn">❐</span><span class="mbtn">✕</span></span>
  </nav>

  <section class="toolbars">
    <div class="row r1">
      <div class="grp w145"><i class="hd"></i><svg class="i"><use href="#globe"/></svg><span class="lbl wini">Iniciar</span><i class="dp dn"></i><svg class="i"><use href="#page"/></svg><svg class="i"><use href="#folder"/></svg><svg class="i"><use href="#save"/></svg></div>
      <div class="grp w81"><svg class="i"><use href="#scis"/></svg><svg class="i"><use href="#copy"/></svg><svg class="i"><use href="#paste"/></svg></div>
      <div class="grp w58"><svg class="i"><use href="#undo"/></svg><svg class="i"><use href="#redo"/></svg></div>
      <div class="grp w130"><svg class="i"><use href="#binoc"/></svg><span class="lbl">Buscador de comandos</span></div>
      <div class="grp w42"><svg class="i"><use href="#info"/></svg><i class="more"></i></div>
      <div class="grp w304"><i class="hd"></i><svg class="i"><use href="#fit"/></svg><i class="dp"></i><svg class="i"><use href="#shade"/></svg><i class="dp"></i><svg class="i"><use href="#cube"/></svg><i class="dp"></i><svg class="i on"><use href="#disk"/></svg><svg class="i"><use href="#redc"/></svg><svg class="i"><use href="#hex"/></svg><i class="dp"></i><svg class="i"><use href="#sq"/></svg><i class="dp"></i><svg class="i ml4"><use href="#arrf"/></svg><svg class="i"><use href="#arrg"/></svg><i class="more"></i></div>
      <div class="grp w70"><i class="hd"></i><svg class="i ml2"><use href="#layers"/></svg><svg class="i"><use href="#csys"/></svg><i class="dp"></i></div>
      <div class="grp w68"><svg class="i"><use href="#key"/></svg><svg class="i"><use href="#ray"/></svg><i class="dp"></i></div>
      <div class="grp w64"><svg class="i"><use href="#ruler"/></svg><svg class="i"><use href="#angle"/></svg><i class="more"></i></div>
    </div>
    <div class="row r2">
      <div class="grp w173"><i class="hd"></i><svg class="i"><use href="#sket"/></svg><i class="dp"></i><svg class="i"><use href="#extr"/></svg><svg class="i"><use href="#revo"/></svg><svg class="i"><use href="#holeb"/></svg><svg class="i"><use href="#boss"/></svg><svg class="i"><use href="#fan"/></svg></div>
      <div class="grp w275"><svg class="i ml2"><use href="#padt"/></svg><svg class="i"><use href="#tile"/></svg><svg class="i"><use href="#nodes"/></svg><svg class="i"><use href="#tplus"/></svg><i class="dp"></i><svg class="i"><use href="#ycube"/></svg><svg class="i"><use href="#blade"/></svg><svg class="i"><use href="#yslab"/></svg><svg class="i"><use href="#slot"/></svg><svg class="i"><use href="#wedge"/></svg><svg class="i"><use href="#cyl2"/></svg></div>
      <div class="grp w168"><svg class="i"><use href="#cup"/></svg><svg class="i"><use href="#petal"/></svg><svg class="i"><use href="#petal"/></svg><svg class="i"><use href="#gable"/></svg><svg class="i"><use href="#diam"/></svg><svg class="i"><use href="#sphere"/></svg><i class="more"></i></div>
      <div class="grp w224"><i class="hd"></i><svg class="i"><use href="#curv"/></svg><svg class="i"><use href="#grid"/></svg><svg class="i"><use href="#gauge"/></svg><svg class="i"><use href="#warp"/></svg><svg class="i"><use href="#fold"/></svg><svg class="i"><use href="#swirl"/></svg><svg class="i"><use href="#leaf"/></svg><svg class="i"><use href="#rain"/></svg><i class="more"></i></div>
      <div class="grp w230"><i class="hd"></i><svg class="i ml8"><use href="#line"/></svg><svg class="i"><use href="#arc"/></svg><svg class="i"><use href="#spline"/></svg><svg class="i"><use href="#prof"/></svg><svg class="i"><use href="#trim"/></svg><svg class="i"><use href="#press"/></svg><svg class="i"><use href="#cur2"/></svg><svg class="i"><use href="#cyar"/></svg><i class="more"></i></div>
    </div>
    <div class="row r3">
      <div class="grp w198"><i class="hd"></i><svg class="i"><use href="#fr1"/></svg><svg class="i"><use href="#frs"/></svg><svg class="i"><use href="#gs1"/></svg><svg class="i"><use href="#os1"/></svg><svg class="i"><use href="#gh1"/></svg><svg class="i"><use href="#oh1"/></svg><svg class="i"><use href="#tabs"/></svg><i class="more"></i></div>
      <div class="grp w87"><i class="hd"></i><svg class="i ml2"><use href="#frame3"/></svg><svg class="i"><use href="#layg"/></svg><svg class="i"><use href="#layers"/></svg></div>
      <div class="grp w57"><svg class="i"><use href="#tag"/></svg><svg class="i"><use href="#txtdoc"/></svg></div>
      <div class="grp w90"><svg class="i"><use href="#chk1"/></svg><svg class="i"><use href="#chk2"/></svg><svg class="i"><use href="#chk3"/></svg><i class="more"></i></div>
    </div>
  </section>

  <section class="selbar">
    <span class="combo c108">Componente<i class="cb"></i></span>
    <span class="combo c114">Ensamble total<i class="cb"></i></span>
    <svg class="j ml2"><use href="#selg"/></svg>
    <i class="vs"></i>
    <svg class="j"><use href="#selr"/></svg><i class="dp sm"></i><svg class="j"><use href="#swirlb"/></svg><svg class="j"><use href="#eggs"/></svg><svg class="j"><use href="#cross"/></svg><svg class="j"><use href="#pin"/></svg>
    <i class="vs"></i>
    <svg class="j"><use href="#dash"/></svg><i class="dp sm"></i>
    <i class="vs"></i>
    <svg class="j"><use href="#move"/></svg><svg class="j"><use href="#gline"/></svg><svg class="j"><use href="#gx"/></svg><svg class="j"><use href="#gs"/></svg><svg class="j"><use href="#gt"/></svg><svg class="j"><use href="#gcirc"/></svg><svg class="j"><use href="#gcross"/></svg><svg class="j"><use href="#plus"/></svg><svg class="j"><use href="#gline"/></svg><svg class="j"><use href="#gblob"/></svg>
    <i class="vs"></i>
    <svg class="j"><use href="#selblk"/></svg>
    <i class="endarrow"></i>
  </section>

  <section class="status">
    <span class="stext">Configura las opciones y use el B2R, Aplicar o Aceptar para agregar el componente</span>
    <i class="stsep s1"></i><i class="stsep s2"></i><i class="stsep s3"></i>
    <i class="stteal"></i>
    <svg class="stfit" viewBox="0 0 14 14"><path d="M3 3h8v8H3z" fill="#4a88d0" stroke="#1a3868"/><path d="M0 3V0h3M11 0h3v3M14 11v3h-3M3 14H0v-3" fill="none" stroke="#444"/></svg>
  </section>

  <main class="main">
    <aside class="tabs">
      <span class="tab active"><svg><use href="#t1"/></svg></span>
      <span class="tab"><svg><use href="#t2"/></svg></span>
      <span class="tab"><svg><use href="#t3"/></svg></span>
      <span class="tab gap12"><svg><use href="#t4"/></svg></span>
      <span class="tab gap8"><svg><use href="#t5"/></svg></span>
      <span class="tab gap10"><svg><use href="#t6"/></svg></span>
      <span class="tab"><svg><use href="#t7"/></svg></span>
      <span class="tab"><svg><use href="#t8"/></svg></span>
      <span class="tab"><svg><use href="#t9"/></svg></span>
      <span class="tab"><svg><use href="#t10"/></svg></span>
      <span class="tab"><svg><use href="#t11"/></svg></span>
      <span class="tab"><svg><use href="#t12"/></svg></span>
    </aside>
    <section class="nav">
      <div class="nav-head"><svg class="navk"><use href="#navk"/></svg><span>Navegador del ensamble</span></div>
      <div class="table">
        <div class="thead"><span class="th1">Nombre de pieza descriptivo</span><span class="th2">Info</span></div>
        <div class="tbody">
          <div class="tr l-sec"><svg class="ic"><use href="#fopen"/></svg><span>Secciones</span></div>
          <div class="tr l-mod"><i class="tog">−</i><svg class="ck"><use href="#ck"/></svg><svg class="ic"><use href="#asm"/></svg><span>_model1</span></div>
          <div class="tr l-res"><i class="tog">+</i><svg class="ic"><use href="#cons"/></svg><span>Restricciones</span></div>
          <div class="tr l-pie"><svg class="ck"><use href="#ck"/></svg><svg class="ic"><use href="#part"/></svg><span>pieza1</span></div>
          <div class="tr l-pie"><svg class="ck"><use href="#ck"/></svg><svg class="ic"><use href="#part"/></svg><span>pieza2</span></div>
        </div>
        <div class="hscroll"><i class="sb-l">‹</i><i class="sb-thumb"></i><i class="sb-r">›</i></div>
      </div>
      <div class="splitter"><i></i></div>
      <div class="acc"><span>Vista preliminar</span><i class="chev down"></i></div>
      <div class="acc"><span>Dependencias</span><i class="chev up"></i></div>
      <div class="dep">
        <div class="deplist"></div>
        <div class="depbtns">
          <span class="dbtn act"><svg><use href="#mag"/></svg></span>
          <span class="dbtn"><svg><use href="#arrr"/></svg></span>
          <span class="dbtn"><svg><use href="#arrl"/></svg></span>
          <span class="dbtn"><svg><use href="#lst"/></svg></span>
        </div>
      </div>
    </section>
    <section class="canvas"></section>
  </main>

  <footer class="bottom">
    <div class="brow ra">
      <div class="grp bw396"><i class="hd"></i><svg class="i"><use href="#star"/></svg><svg class="i"><use href="#tex"/></svg><span class="lbl dis">Finalizar croquis</span><svg class="i ml2"><use href="#prof2"/></svg><svg class="i"><use href="#line"/></svg><svg class="i"><use href="#arc"/></svg><svg class="i"><use href="#circ"/></svg><svg class="i"><use href="#cnr1"/></svg><svg class="i"><use href="#cnr2"/></svg><svg class="i"><use href="#rect"/></svg><svg class="i"><use href="#spline"/></svg><svg class="i"><use href="#plusb"/></svg><svg class="i"><use href="#profg"/></svg><i class="dp"></i></div>
      <div class="grp bw81"><svg class="i"><use href="#g1"/></svg><svg class="i"><use href="#g2"/></svg><svg class="i"><use href="#gx"/></svg></div>
      <div class="grp bw42"><svg class="i"><use href="#g2"/></svg><i class="dp"></i></div>
      <div class="grp bw91"><svg class="i"><use href="#g3"/></svg><svg class="i"><use href="#g4"/></svg><svg class="i"><use href="#g5"/></svg><i class="dp"></i></div>
      <div class="grp bw39"><svg class="i"><use href="#g6"/></svg><i class="more"></i></div>
    </div>
    <div class="brow rb">
      <div class="grp bw185"><i class="hd"></i><svg class="i"><use href="#ybin"/></svg><i class="dp"></i><svg class="i"><use href="#blocks"/></svg><svg class="i"><use href="#addc"/></svg><i class="dp"></i><svg class="i"><use href="#orb"/></svg><svg class="i"><use href="#constr"/></svg><svg class="i"><use href="#perp"/></svg></div>
      <div class="grp bw82"><svg class="i"><use href="#keyc"/></svg><svg class="i"><use href="#dots3"/></svg><svg class="i"><use href="#chain"/></svg></div>
      <div class="grp bw33"><svg class="i"><use href="#hexd"/></svg></div>
      <div class="grp bw55"><svg class="i"><use href="#link"/></svg><svg class="i"><use href="#tree"/></svg></div>
      <div class="grp bw46"><svg class="i"><use href="#gbox"/></svg><i class="dp"></i><i class="more"></i></div>
    </div>
    <div class="bstrip"></div>
  </footer>

  <svg class="model" viewBox="0 0 1600 973">
    <ellipse cx="822" cy="807" rx="100" ry="15.500" fill="#b87400"/>
    <path d="M722 610V807A100 15.500 0 0 0 922 807V610z" fill="url(#cyl)"/>
    <path d="M649 538V593A172 30 0 0 0 992 593V538z" fill="url(#flange)" stroke="#7a5000" stroke-width=".6"/>
    <ellipse cx="820.500" cy="538" rx="172" ry="30" fill="#ffae00" stroke="#7a5000" stroke-width=".8"/>
    <ellipse cx="820" cy="538.500" rx="43" ry="8" fill="url(#hole)" stroke="#8a5a00" stroke-width=".6"/>
    <g fill="none" stroke="#f4d8a8" stroke-width="1">
      <path d="M790 733L822 719L905 723L907 812L822 806L790 822ZM822 719V806"/>
    </g>
    <path d="M822 805V650" stroke="#e8dcc8" stroke-width="1"/>
    <path d="M821 633l-3.500 22 3.500 2 3.500-2z" fill="#b8b4ac"/>
    <text x="821" y="625" class="axis-g">Z</text>
    <path d="M905 811L968 814M790 822L875 826L887 818M790 822L770 832" stroke="#4050b8" stroke-width="1" fill="none"/>
    <path d="M966 809l22 6-22 5z" fill="#0a14d0"/>
    <path d="M762 828c4-2 9-2 9 1 0 3-4 7-8 7-3 0-5-1-6 0 1-3 3-6 5-8z" fill="#0a14d0"/>
    <text x="997" y="816" class="axis-b">Y</text>

    <path d="M321 842l7-6h20v18l-6 6h-21z" fill="#e0e2e2" stroke="#b4b8b8" stroke-width="1"/>
    <path d="M321 842h21v18M342 842l6-6" fill="none" stroke="#c4c8c8"/>
    <path d="M328 853V826" stroke="#3a6ac0" stroke-width="2"/>
    <path d="M328 819l-3 10h6z" fill="#1848b0"/>
    <path d="M328 856l-10 4" stroke="#d02838" stroke-width="3"/>
    <path d="M345 857h10" stroke="#38a058" stroke-width="3"/>
    <path d="M354 854l7 3-7 3z" fill="#38a058"/>
    <text x="323" y="821" class="axis-d">Z</text>
    <text x="309" y="868" class="axis-r">X</text>
    <text x="362" y="865" class="axis-gr">Y</text>
  </svg>

  <aside class="preview">
    <div class="pv-title">Vista preliminar del componente</div>
    <div class="pv-body">
      <div class="pv-canvas">
        <svg class="pv-svg" viewBox="1342 664 235 233">
          <path d="M1435 790h50v30a25 8 0 0 1-50 0z" fill="#0a0ac0"/>
          <path d="M1379 742v40a81 30 0 0 0 162 0v-40z" fill="#0808d8"/>
          <ellipse cx="1460" cy="742" rx="81" ry="30" fill="#0a0ae8" stroke="#2c2cf0" stroke-width=".7"/>
          <ellipse cx="1460" cy="742" rx="9" ry="4" fill="#0808b0" stroke="#3030a0"/>
          <path d="M1398 827l14-7 14 4v16l-14 7-14-4zM1398 827l14 5 14-8M1412 832v15" fill="#c4c8c6" fill-opacity=".5" stroke="#a8b0ac" stroke-width=".8"/>
          <path d="M1393 842l30-11" stroke="#80c090" stroke-width="1.500"/>
          <path d="M1394 842V815" stroke="#1840c0" stroke-width="2.500"/>
          <path d="M1394 809l-4 9h8z" fill="#1840c0"/>
          <path d="M1394 842l21 9" stroke="#c01818" stroke-width="2.500"/>
          <circle cx="1393" cy="842" r="4.500" fill="#dcdcdc" stroke="#666"/>
          <text x="1391" y="807" class="axis-pz">Z</text>
          <text x="1416" y="860" class="axis-px">X</text>
        </svg>
      </div>
    </div>
    <div class="pv-foot"></div>
  </aside>

  <aside class="dialog">
    <div class="dg-title"><span>Agregar el componente</span><i class="dg-btn">↻</i><i class="dg-btn">−</i><i class="dg-btn dg-close">✕</i></div>
    <div class="dg-body">
      <div class="hdr h20"><span>Pieza</span><i class="chev up"></i></div>
      <div class="panel p-pieza">
        <div class="selrow"><span class="tick">✔</span><span class="seltext">Seleccionar la pieza (1)</span><span class="sqbtn"><svg><use href="#part"/></svg></span></div>
        <div class="cap c20">Piezas cargadas</div>
        <div class="list l1"><div class="li big">pieza1.prt</div><div class="li big sel">pieza2.prt</div></div>
        <div class="cap c18">Piezas recientes</div>
        <div class="list l2"><div class="li sel">pieza2.prt</div><div class="li">pieza1.prt</div></div>
        <div class="abierto"><span>Abierto</span><span class="sqbtn"><svg><use href="#folder"/></svg></span></div>
        <div class="dup"><span>Duplicados</span><i class="chev down"></i></div>
      </div>
      <div class="hdr"><span>Emplazamiento</span><i class="chev up"></i></div>
      <div class="panel p-emp">
        <div class="frow"><span>Posición</span><span class="fcombo">Origen absoluto<i class="cb"></i></span></div>
        <div class="check-row"><i class="cbx"></i><span>Dispersar</span></div>
      </div>
      <div class="hdr hr1"><span>Replicación</span><i class="chev up"></i></div>
      <div class="panel p-rep">
        <div class="frow"><span>Adición múltiple</span><span class="fcombo">Ninguno<i class="cb"></i></span></div>
      </div>
      <div class="hdr"><span>Ajustes</span><i class="chev up"></i></div>
      <div class="panel p-aj">
        <div class="frow"><span>Nombre</span><span class="finput">PIEZA2</span></div>
        <div class="frow"><span>Reference Set</span><span class="fcombo">Modelo ("MODEL")<i class="cb"></i></span></div>
        <div class="frow"><span>Opción de capa</span><span class="fcombo">Original<i class="cb"></i></span></div>
        <div class="frow dis"><span>Capa</span><span class="fdis">1</span></div>
      </div>
      <div class="hdr"><span>Vista preliminar</span><i class="chev up"></i></div>
      <div class="panel p-vp"><div class="check-row"><i class="cbx on">✔</i><span>Vista preliminar</span></div></div>
      <div class="dg-foot"><span class="pbtn">Aceptar</span><span class="pbtn green">Aplicar</span><span class="pbtn">Cancelar</span></div>
    </div>
    <div class="dg-bar"></div>
  </aside>

  <div class="droplist">
    <div class="dl sel">Origen absoluto</div>
    <div class="dl">Seleccionar el origen</div>
    <div class="dl">Por restricciones</div>
    <div class="dl">Mover</div>
  </div>

  <svg class="notes" viewBox="0 0 1600 973">
    <g fill="none" stroke="#e00000">
      <rect x="260" y="167" width="265" height="31" stroke-width="4"/>
      <rect x="374" y="535" width="134" height="20" stroke-width="5"/>
      <rect x="72.500" y="940" width="22" height="34" stroke-width="4"/>
      <path d="M85 940L259 204" stroke-width="4.500"/>
      <path d="M245 232L258 200L263 234" stroke-width="4.500"/>
      <path d="M515 198L498 528" stroke-width="4.500"/>
      <path d="M489 500L497 532L507 500" stroke-width="4.500"/>
    </g>
  </svg>
</div>
</body>
</html>
```

FILE: styles.css
```
* { box-sizing: border-box; }
html, body { margin: 0; padding: 0; width: 1600px; height: 973px; overflow: hidden; }
body { background: #2b6a98; font-family: "Liberation Sans", Arial, sans-serif; font-size: 9px; color: #333; }
.defs { position: absolute; }
i { font-style: normal; display: block; }
.app { position: relative; width: 1593px; height: 973px; border-right: 4px solid #26282c; display: flex; flex-direction: column; background: #d8d8d8; }

.titlebar { height: 25px; display: flex; align-items: center; padding: 8px 3px 0 2px; background: linear-gradient(#3c3c3c 0, #8c8c8c 4px, #505050 8px, #181818 8px, #181818 100%); color: #e0e0e0; }
.ttl-ico { width: 16px; height: 16px; margin-top: -3px; }
.ttl-text { font-weight: 700; font-size: 10.500px; letter-spacing: .33px; color: #d8d8d8; }
.siemens { margin-left: auto; margin-right: 20px; font-weight: 700; font-size: 11.500px; letter-spacing: .5px; color: #fff; }
.wbtn { width: 15px; height: 17px; margin: -8px 0 0 4px; background: #4a4a4a; border: 1px solid #666; border-radius: 2px; display: flex; align-items: center; justify-content: center; position: relative; color: #fff; font-size: 12px; font-weight: 700; }
.wmin { width: 7px; height: 3px; background: #fff; margin-top: 8px; }
.wmax { width: 10px; height: 9px; border: 1px solid #fff; border-top-width: 2px; }
.wclose { background: #e25c30; border-color: #e88; }

.menubar { height: 21px; display: flex; align-items: center; padding-left: 4px; background: linear-gradient(#e8e8e8, #dedede); border-bottom: 1px solid #c4c4c4; color: #444; }
.menu-ico { width: 15px; height: 15px; margin-right: 5px; }
.mi { margin-right: 11px; }
.mdi { margin-left: auto; margin-right: 4px; display: flex; gap: 2px; }
.mbtn { width: 14px; height: 14px; border: 1px solid #999; border-radius: 2px; background: #e8e8e8; text-align: center; font-size: 9px; line-height: 12px; font-weight: 700; color: #444; }

.toolbars { height: 86px; background: linear-gradient(#dedede, #c8c8c8); border-bottom: 1px solid #8c8c8c; }
.row { display: flex; height: 29px; }
.r2 { height: 28px; }
.brow { display: flex; }
.grp { display: flex; align-items: center; height: 100%; background: linear-gradient(#e2e2e2, #d2d2d2); border-right: 1px solid #c0c0c0; flex: none; position: relative; }
.hd { width: 3px; height: 20px; margin-left: 1px; flex: none; background: repeating-linear-gradient(#8a8a8a 0 1px, transparent 1px 3px); }
.w145 { width: 146px; }
.w81 { width: 80px; padding-left: 1px; }
.w58 { width: 58px; padding-left: 3px; }
.w130 { width: 130px; padding-left: 3px; }
.w42 { width: 42px; padding-left: 2px; }
.w304 { width: 304px; }
.w70 { width: 70px; }
.w68 { width: 68px; padding-left: 2px; }
.w64 { width: 64px; padding-left: 1px; }
.w173 { width: 173px; }
.w275 { width: 275px; }
.w168 { width: 168px; }
.w224 { width: 224px; }
.w230 { width: 230px; }
.w198 { width: 198px; }
.w87 { width: 87px; }
.w57 { width: 57px; padding-left: 2px; }
.w90 { width: 90px; padding-left: 2px; }
.i { width: 26px; height: 24px; flex: none; display: block; }
.i.on { background: #f4f4f4; border: 1px solid #888; border-radius: 2px; padding: 1px; height: 27px; }
.ml2 { margin-left: 2px; }
.ml4 { margin-left: 5px; }
.ml8 { margin-left: 8px; }
.lbl { color: #3c3c3c; white-space: nowrap; flex: none; }
.wini { width: 27px; }
.dp { width: 10px; height: 10px; flex: none; position: relative; }
.dp::after { content: ""; position: absolute; left: 2px; top: 3px; border: 3px solid transparent; border-top: 4px solid #222; border-bottom: 0; }
.dp.dn { width: 8px; }
.dp.sm { width: 7px; }
.dp.sm::after { left: 0; }
.more { width: 8px; height: 24px; flex: none; position: relative; }
.more::after { content: ""; position: absolute; left: 1px; bottom: 2px; border: 3px solid transparent; border-top: 4px solid #222; border-bottom: 0; }

.selbar { height: 23px; display: flex; align-items: center; padding: 1px 0 0 4px; background: linear-gradient(#e0e0e0, #d0d0d0); border-bottom: 2px solid #efefef; position: relative; }
.combo { height: 15px; border: 1px solid #777; background: #fff; border-radius: 2px; padding-left: 3px; line-height: 13px; color: #444; position: relative; flex: none; }
.c108 { width: 108px; margin-right: 8px; }
.c114 { width: 114px; }
.cb { position: absolute; right: 0; top: 0; bottom: 0; width: 14px; background: linear-gradient(#9cc4e8, #3f84c4); border: 1px solid #3a5a88; border-radius: 2px; }
.cb::after { content: ""; position: absolute; left: 2px; top: 3px; border: 4px solid transparent; border-top: 5px solid #10204a; border-bottom: 0; }
.j { width: 19.500px; height: 16px; flex: none; display: block; }
.vs { width: 1px; height: 21px; background: #bcbcbc; margin: 0 2px; flex: none; }
.endarrow { position: absolute; right: 2px; top: 15px; border: 3px solid transparent; border-top: 4px solid #222; border-bottom: 0; }

.status { height: 20px; position: relative; display: flex; align-items: center; padding: 1px 0 0 2px; background: #dadada; border-bottom: 2px solid #8e8e8e; }
.stext { font-weight: 700; font-size: 9.500px; color: #2a2a2a; white-space: nowrap; }
.stsep { position: absolute; top: 1px; bottom: 1px; width: 1px; background: #efefef; }
.s1 { left: 753px; }
.s2 { left: 1507px; }
.s3 { left: 1524px; }
.stteal { position: absolute; left: 1556px; top: 3px; width: 14px; height: 14px; background: #80a0a6; }
.stfit { position: absolute; left: 1574px; top: 3px; width: 13px; height: 14px; }

.main { flex: 1; display: flex; min-height: 0; }
.tabs { width: 26px; flex: none; background: #a9a9a9; padding: 12px 0 0 4px; display: flex; flex-direction: column; gap: 1.500px; border-left: 1px solid #bbb; }
.tab { height: 33px; width: 23px; background: #dcdcdc; border: 1px solid #9a9a9a; border-right: 0; border-radius: 4px 0 0 4px; display: flex; align-items: center; justify-content: center; flex: none; }
.tab svg { width: 20px; height: 20px; display: block; }
.tab.active { height: 35px; background: #f4f4f4; border-color: #ccc; }
.gap12 { margin-top: 11px; }
.gap8 { margin-top: 8px; }
.gap10 { margin-top: 10px; }

.nav { width: 250px; flex: none; background: #efefef; border-right: 2px solid #bbb; padding-left: 9px; display: flex; flex-direction: column; height: 734px; }
.nav-head { height: 28px; display: flex; align-items: center; padding-left: 3px; font-weight: 700; font-size: 9.500px; color: #3a3a3a; }
.navk { width: 13px; height: 13px; margin-right: 9px; }
.table { width: 230px; flex: none; border: 1px solid #aaa; border-top: 0; }
.thead { height: 16px; display: flex; align-items: center; background: linear-gradient(#f8f8f8, #e2e2e2); border: 1px solid #bbb; border-top-color: #ddd; }
.th1 { width: 192px; padding-left: 5px; border-right: 1px solid #aaa; line-height: 14px; white-space: nowrap; overflow: hidden; color: #444; }
.th2 { padding-left: 5px; color: #444; }
.tbody { height: 383px; background: linear-gradient(to right, transparent 191px, #777 191px, #777 192px, transparent 192px), repeating-linear-gradient(#fff 0 16.600px, #f4f4f4 16.600px 33.200px); }
.tr { height: 16.600px; display: flex; align-items: center; color: #4a4a4a; position: relative; }
.ic { width: 15px; height: 14px; flex: none; margin-right: 2px; }
.ck { width: 13px; height: 13px; flex: none; margin-right: 1px; }
.tog { width: 9px; height: 9px; flex: none; border: 1px solid #888; background: #fff; border-radius: 1px; font-size: 9px; line-height: 6px; text-align: center; margin-right: 5px; color: #333; }
.l-sec { padding-left: 15px; }
.l-mod { padding-left: 4px; }
.l-res { padding-left: 19px; }
.l-pie { padding-left: 33px; }
.hscroll { height: 12px; display: flex; align-items: center; background: linear-gradient(#f4f4f4, #e8e8e0); }
.sb-l, .sb-r { width: 14px; text-align: center; color: #2a5aa8; font-weight: 700; font-size: 14px; line-height: 10px; }
.sb-r { margin-left: auto; }
.sb-thumb { width: 112px; height: 11px; background: linear-gradient(#cfe0f2, #b4cce8); margin-left: 2px; }
.splitter { height: 14px; flex: none; display: flex; justify-content: center; align-items: center; width: 230px; }
.splitter i { width: 40px; height: 5px; background: #c4c4c4; border: 1px solid #aaa; }
.acc { height: 17px; width: 230px; flex: none; display: flex; align-items: center; justify-content: space-between; padding-left: 5px; font-weight: 700; color: #333; background: linear-gradient(#f8f8f8, #d4d4d4); font-size: 9.500px; letter-spacing: .2px; }
.chev { width: 18px; height: 100%; flex: none; border-left: 1px solid #ccc; position: relative; }
.chev::before { content: ""; position: absolute; left: 5px; width: 7px; height: 7px; border-left: 2px solid #555; border-top: 2px solid #555; }
.chev.up::before { top: 6px; transform: rotate(45deg); }
.chev.down::before { top: 2px; transform: rotate(225deg); }
.dep { width: 230px; height: 243px; flex: none; background: #d0d0d0; padding: 5px 5px 4px 5px; display: flex; gap: 4px; border-bottom: 1px solid #bbb; }
.deplist { width: 192px; height: 234px; background: repeating-linear-gradient(#fff 0 16.700px, #f4f4f4 16.700px 33.400px); border: 1px solid #888; }
.depbtns { display: flex; flex-direction: column; gap: 2px; }
.dbtn { width: 24px; height: 26px; background: #e6e6e6; border: 1px solid #ccc; border-radius: 3px; display: flex; align-items: center; justify-content: center; }
.dbtn svg { width: 20px; height: 20px; }
.dbtn.act { background: #f4f4f4; border-color: #777; }
.canvas { flex: 1; background: linear-gradient(#b4b4b4 0, #c4c5c6 20%, #d8d9da 45%, #e4e5e7 70%, #e8e9ea 100%); height: 734px; }

.bottom { height: 63px; margin-top: -1px; flex: none; background: linear-gradient(#e8e8e8, #d4d4d4); display: flex; flex-direction: column; }
.ra { height: 27px; margin: 3px 0 0 293px; }
.rb { height: 27px; margin-top: 1px; }
.bstrip { height: 5px; background: #1a1a1a; }
.bw396 { width: 397px; }
.bw81 { width: 81px; padding-left: 2px; }
.bw42 { width: 42px; }
.bw91 { width: 91px; }
.bw39 { width: 39px; }
.bw185 { width: 185px; }
.bw82 { width: 82px; padding-left: 2px; }
.bw33 { width: 33px; padding-left: 3px; }
.bw55 { width: 55px; }
.bw46 { width: 46px; }
.bw185 .hd { margin-left: 4px; margin-right: 2px; }
.dis { color: #a8a8a8; }

.model { position: absolute; left: 0; top: 0; width: 1600px; height: 973px; pointer-events: none; }
.model text, .pv-svg text { font-family: "Liberation Sans", Arial, sans-serif; }
.axis-g { font-size: 15px; fill: #c8c0b0; }
.axis-b { font-size: 13px; fill: #5868a8; }
.axis-d { font-size: 12px; fill: #7a8ab0; }
.axis-r { font-size: 12px; fill: #c88080; }
.axis-gr { font-size: 12px; fill: #80b090; }
.axis-pz { font-size: 11px; fill: #2050c0; }
.axis-px { font-size: 12px; fill: #b03030; }
.ts { font: 700 8px "Liberation Sans", sans-serif; }
.tA { font: 700 10px "Liberation Serif", serif; fill: #222; }

.preview { position: absolute; left: 1330px; top: 631px; width: 259px; height: 282px; display: flex; flex-direction: column; }
.pv-title { height: 21px; background: linear-gradient(#666 0, #222 6px, #181818 100%); border-radius: 5px 5px 0 0; color: #eee; font-weight: 700; font-size: 10px; letter-spacing: .42px; padding: 6px 0 0 7px; line-height: 13px; white-space: nowrap; }
.pv-body { flex: 1; background: #eef0ee; padding: 9px 9px 5px 9px; min-height: 0; }
.pv-canvas { height: 100%; border: 3px solid; border-color: #8a8a7c #f4f4ec #f4f4ec #8a8a7c; background: linear-gradient(#b2b2b4, #cfd0d2 40%, #e4e5e7 75%, #e6e7e9); }
.pv-svg { display: block; width: 100%; height: 100%; }
.pv-foot { height: 8px; background: linear-gradient(#555, #1a1a1a); border-radius: 0 0 5px 5px; }

.dialog { position: absolute; left: 262px; top: 171px; width: 237px; height: 637px; display: flex; flex-direction: column; }
.dg-title { height: 21px; flex: none; display: flex; align-items: center; gap: 3px; padding: 1px 2px 0 8px; background: linear-gradient(#555 0, #1c1c1c 5px, #141414 100%); border-radius: 5px 5px 0 0; color: #f0f0f0; font-weight: 700; font-size: 10px; letter-spacing: .3px; }
.dg-title span { margin-right: auto; white-space: nowrap; }
.dg-btn { width: 16px; height: 16px; background: #4c4c4c; border-radius: 2px; border: 1px solid #666; text-align: center; font-size: 11px; line-height: 14px; color: #fff; font-weight: 700; }
.dg-close { background: #e0582c; border-color: #f0a890; }
.dg-body { flex: 1; background: #e4e4e4; padding: 0 5px 0 6px; border-right: 1px solid #ccc; min-height: 0; }
.dg-bar { height: 6px; flex: none; background: #181818; border-radius: 0 0 4px 4px; }
.hdr { height: 18px; display: flex; align-items: center; justify-content: space-between; padding-left: 5px; background: linear-gradient(#fafafa, #dadada); font-weight: 700; font-size: 9.500px; color: #333; }
.h20 { height: 20px; padding-top: 4px; }
.hr1 { margin-top: 1px; }
.panel { background: #c8c8c8; padding: 0 7px; color: #333; }
.p-pieza { height: 285px; padding-top: 8px; }
.p-emp { height: 49px; padding-top: 7px; }
.p-rep { height: 31px; padding-top: 6px; }
.p-aj { height: 92px; padding-top: 6px; }
.p-vp { height: 30px; padding-top: 9px; }
.selrow { height: 24px; display: flex; align-items: center; background: linear-gradient(to right, #e0a878, #d8b898 60%, #c8c8c8 85%); border-radius: 4px; padding-left: 3px; position: relative; color: #444; margin-top: -1px; }
.tick { color: #28a028; font-size: 14px; width: 14px; line-height: 14px; }
.sqbtn { width: 25px; height: 24px; margin-left: auto; background: #ececec; border: 1px solid #777; border-radius: 3px; display: flex; align-items: center; justify-content: center; flex: none; }
.sqbtn svg { width: 20px; height: 20px; }
.cap { color: #333; }
.c20 { height: 20px; line-height: 22px; }
.c18 { height: 18px; line-height: 18px; }
.list { width: 213px; background: #fff; border: 1px solid #777; padding: 1px; }
.l1 { height: 84px; background: linear-gradient(#fff 52px, #f4f4f4 52px, #f4f4f4 68px, #fff 68px); }
.l2 { height: 76px; }
.li { height: 12px; line-height: 12px; padding-left: 2px; color: #444; }
.li.big { height: 17px; line-height: 17px; padding-left: 3px; }
.li.sel { background: #2e62c0; color: #e8f0ff; }
.abierto { height: 24px; margin-top: 4px; display: flex; align-items: center; }
.dup { height: 17px; margin-top: 3px; display: flex; align-items: center; justify-content: space-between; padding-left: 7px; background: linear-gradient(#c0c0c0, #a8a8a8); font-weight: 700; color: #333; font-size: 9.500px; }
.dup .chev { border: 0; }
.frow { display: flex; align-items: center; justify-content: space-between; height: 17px; margin-bottom: 4px; }
.frow.dis { color: #a8a8a8; height: 18px; margin-top: -2px; }
.fcombo, .finput { width: 107px; height: 17px; background: #fff; border: 1px solid #777; border-radius: 3px; padding-left: 3px; line-height: 15px; position: relative; color: #444; }
.fcombo .cb { width: 15px; }
.finput { font-family: "Liberation Mono", monospace; font-size: 10px; letter-spacing: 1px; color: #222; }
.fdis { width: 61px; height: 18px; background: #c4c4c4; border: 1px solid #aaa; border-radius: 3px; text-align: right; padding-right: 3px; line-height: 16px; }
.check-row { display: flex; align-items: center; gap: 2px; height: 13px; }
.cbx { width: 13px; height: 13px; background: #ddd; border: 1px solid #777; border-radius: 2px; font-size: 10px; line-height: 11px; text-align: center; color: #0c2050; }
.cbx.on { background: #6cb0e8; }
.dg-foot { height: 30px; display: flex; gap: 6px; padding: 8px 0 0 29px; }
.pbtn { width: 59px; height: 16px; background: linear-gradient(#f0f0f0, #c8c8c8); border: 1px solid #666; border-radius: 3px; text-align: center; line-height: 14px; color: #333; }
.pbtn.green { background: linear-gradient(#98e088, #58b858); border-color: #3a7a3a; }

.droplist { position: absolute; left: 380px; top: 539px; width: 108px; height: 55px; background: #fff; border: 1px solid #222; padding: 1px; color: #333; }
.dl { height: 13px; line-height: 13px; padding-left: 1px; }
.dl.sel { background: #2e62c0; color: #e8f0ff; }

.notes { position: absolute; left: 0; top: 0; width: 1600px; height: 973px; pointer-events: none; }
```
